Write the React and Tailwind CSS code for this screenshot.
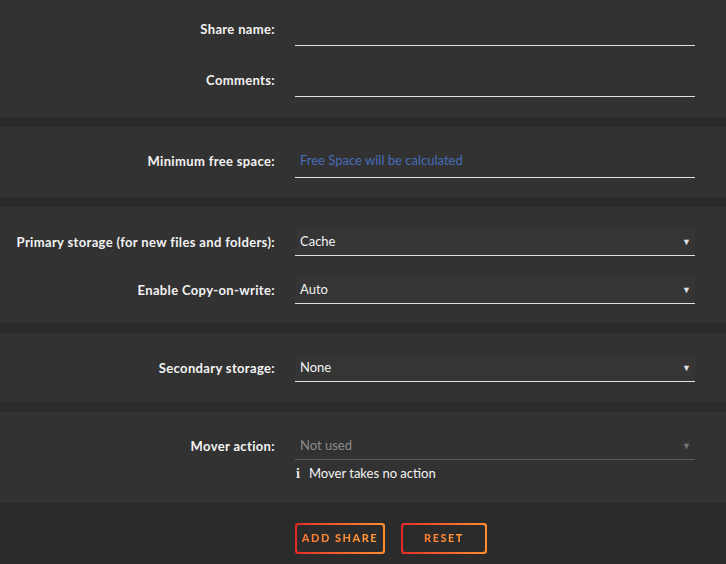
import React from "react";

const Label = ({ children, raised }) => (
  <div
    className={
      "w-[275px] shrink-0 whitespace-nowrap text-right text-[13px] font-bold leading-[16px] tracking-[0.35px] text-[#f2f2f2] " +
      (raised ? "-mt-[6px]" : "")
    }
  >
    {children}
  </div>
);

const TextInput = ({ placeholder }) => (
  <div className="flex h-[28px] w-[400px] items-center border-b border-[#e0e0e0] pb-[5px] pl-[5px] text-[13px]">
    {placeholder && <span className="text-[#486dba]">{placeholder}</span>}
  </div>
);

const Select = ({ value, disabled }) => (
  <div
    className={
      disabled
        ? "flex h-[28px] w-[400px] items-center justify-between border-b border-[#5a5a5a] pl-[5px] pr-[4px] text-[13px] text-[#8a8a8a]"
        : "flex h-[28px] w-[400px] items-center justify-between border-b border-[#e0e0e0] bg-[#353535] pl-[5px] pr-[4px] text-[13px] text-[#f2f2f2]"
    }
  >
    <span>{value}</span>
    <span className={disabled ? "text-[9px] text-[#777]" : "text-[9px] text-[#e0e0e0]"}>▼</span>
  </div>
);

const Row = ({ label, raised, children }) => (
  <div className="flex items-center gap-5">
    <Label raised={raised}>{label}</Label>
    {children}
  </div>
);

const Section = ({ children, className }) => (
  <div className={"flex flex-col bg-[#323232] " + className}>{children}</div>
);

export default function App() {
  return (
    <div
      className="flex min-h-[564px] w-[726px] flex-col gap-[10px] bg-[#2b2b2b]"
      style={{ fontFamily: "Lato, 'Liberation Sans', sans-serif" }}
    >
      <Section className="gap-[23px] pt-[18px] pb-[20px]">
        <Row label="Share name:" raised>
          <TextInput />
        </Row>
        <Row label="Comments:" raised>
          <TextInput />
        </Row>
      </Section>
      <Section className="pt-[23px] pb-[19px]">
        <Row label="Minimum free space:" raised>
          <TextInput placeholder="Free Space will be calculated" />
        </Row>
      </Section>
      <Section className="gap-[20px] pt-[21px] pb-[19px]">
        <Row label="Primary storage (for new files and folders):">
          <Select value="Cache" />
        </Row>
        <Row label="Enable Copy-on-write:">
          <Select value="Auto" />
        </Row>
      </Section>
      <Section className="pt-[21px] pb-[20px]">
        <Row label="Secondary storage:">
          <Select value="None" />
        </Row>
      </Section>
      <div className="flex flex-col bg-[#323232] pt-[20px] pb-[22px]">
        <Row label="Mover action:">
          <Select value="Not used" disabled />
        </Row>
        <div className="ml-[295px] mt-[7px] flex h-[14px] items-center gap-[8px] text-[13px] text-[#f2f2f2]">
          <span className="w-[6px] text-center font-serif text-[13px] font-bold">i</span>
          <span>Mover takes no action</span>
        </div>
      </div>
      <div className="ml-[295px] mt-[10px] flex gap-4">
        <button className="rounded-[3px] bg-gradient-to-r from-[#e22828] to-[#ff8c2f] p-[2px]">
          <span className="flex h-[27px] w-[86px] items-center justify-center rounded-[2px] bg-[#2b2b2b] text-[11px] font-black tracking-[1.5px]">
            <span className="bg-gradient-to-r from-[#ff7a2f] to-[#ff9a3a] bg-clip-text text-transparent">ADD SHARE</span>
          </span>
        </button>
        <button className="rounded-[3px] bg-gradient-to-r from-[#e22828] to-[#ff8c2f] p-[2px]">
          <span className="flex h-[27px] w-[82px] items-center justify-center rounded-[2px] bg-[#2b2b2b] text-[11px] font-black tracking-[1.5px]">
            <span className="bg-gradient-to-r from-[#ff7a2f] to-[#ff9a3a] bg-clip-text text-transparent">RESET</span>
          </span>
        </button>
      </div>
    </div>
  );
}
